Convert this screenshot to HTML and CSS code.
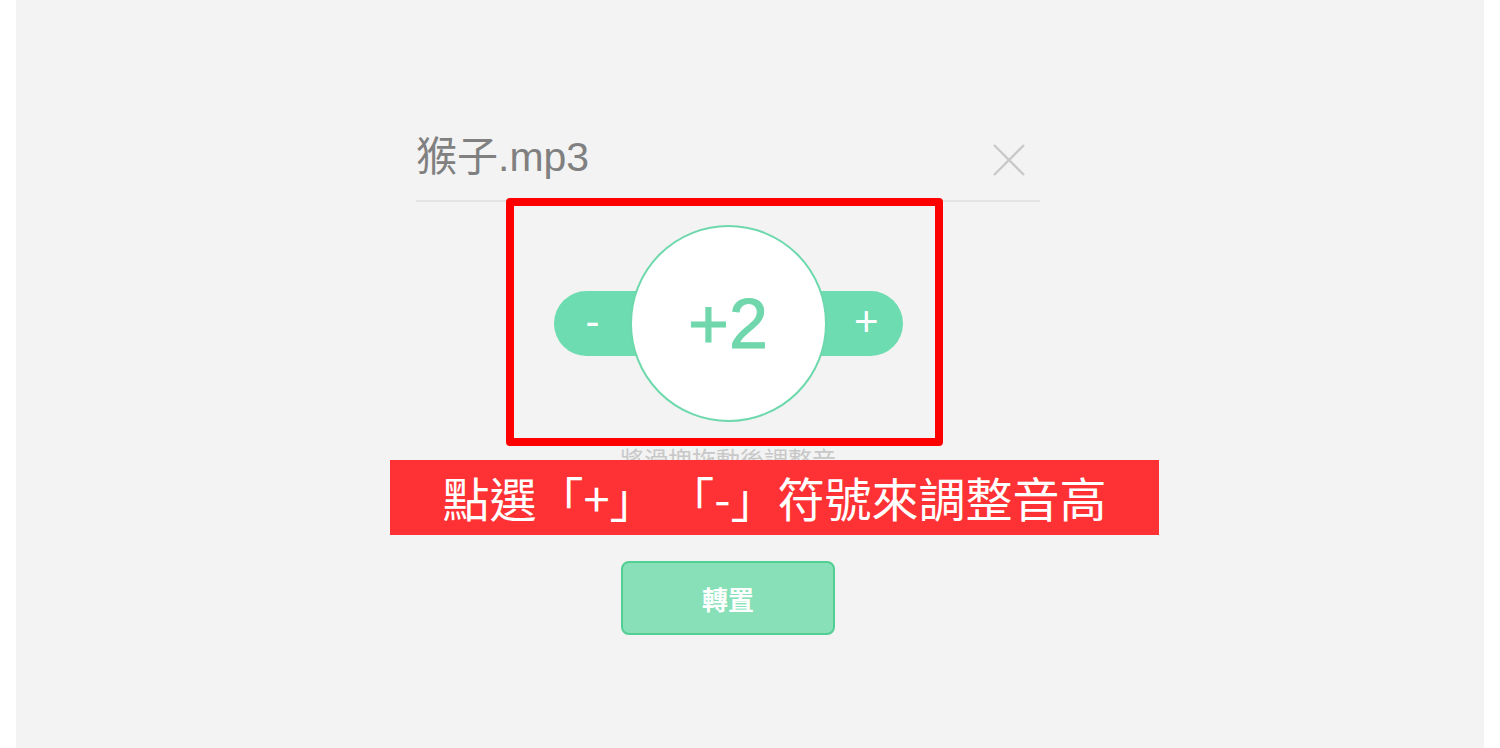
FILE: index.html
```html
<!DOCTYPE html>
<html lang="zh-Hant">
<head>
<meta charset="utf-8">
<title>轉置</title>
<link rel="stylesheet" href="styles.css">
</head>
<body>
<div class="panel">
  <div class="column">
    <div class="file-row">
      <span class="file-name">猴子.mp3</span>
      <svg class="close" width="34" height="34" viewBox="0 0 34 34"><path d="M2 2 L32 32 M32 2 L2 32" stroke="#c9c9c9" stroke-width="2.4" fill="none"/></svg>
    </div>
    <div class="stepper">
      <div class="pill">
        <span class="pill-btn minus">-</span>
        <span class="pill-btn plus">+</span>
      </div>
      <div class="dial">+2</div>
    </div>
    <div class="hint">將滑塊拖動後調整音</div>
    <div class="actions">
      <button class="convert">轉置</button>
    </div>
  </div>
  <div class="frame"></div>
  <div class="banner">點選「+」 「-」符號來調整音高</div>
</div>
</body>
</html>
```
FILE: styles.css
```css
html, body {
  margin: 0;
  padding: 0;
  background: #ffffff;
  font-family: "Liberation Sans", "Noto Sans CJK TC", sans-serif;
}
.panel {
  position: relative;
  margin: 0 16px;
  height: 748px;
  background: #f3f3f3;
  overflow: hidden;
}
.column {
  width: 624px;
  margin-left: 400px;
  padding-top: 120px;
}
.file-row {
  display: flex;
  justify-content: space-between;
  align-items: center;
  height: 80px;
  border-bottom: 2px solid #e3e3e3;
}
.file-name {
  font-size: 41px;
  line-height: 50px;
  color: #808080;
  margin-top: -6px;
}
.close {
  margin-right: 14px;
}
.stepper {
  position: relative;
  width: 349px;
  height: 197px;
  margin: 23px auto 0;
  display: flex;
  align-items: center;
}
.pill {
  width: 100%;
  height: 65px;
  border-radius: 33px;
  background: #6ddcb0;
  display: flex;
  justify-content: space-between;
  align-items: center;
  padding: 0 24px 0 32px;
  box-sizing: border-box;
  color: #ffffff;
  font-size: 42px;
}
.pill-btn {
  line-height: 40px;
  margin-top: -4px;
}
.dial {
  position: absolute;
  left: 76px;
  top: 0;
  width: 193px;
  height: 193px;
  border: 2.5px solid #6ed8ad;
  border-radius: 50%;
  background: #ffffff;
  display: flex;
  align-items: center;
  justify-content: center;
  color: #6fd7ab;
  font-size: 70px;
  -webkit-text-stroke: 1px #6fd7ab;
}
.hint {
  margin-top: 22px;
  text-align: center;
  font-size: 24px;
  line-height: 30px;
  color: #c8c8c8;
  font-family: "Noto Sans CJK TC", sans-serif;
}
.actions {
  display: flex;
  justify-content: center;
  margin-top: 87px;
}
.convert {
  width: 214px;
  height: 74px;
  border: 2px solid #52cf92;
  border-radius: 8px;
  background: #88e0b8;
  color: #ffffff;
  font-family: "Noto Sans CJK TC", sans-serif;
  font-weight: 700;
  font-size: 26px;
  padding: 0;
}
.frame {
  position: absolute;
  left: 490px;
  top: 198px;
  width: 421px;
  height: 232px;
  border: 8px solid #ff0000;
  border-radius: 4px;
}
.banner {
  position: absolute;
  left: 374px;
  top: 460px;
  width: 769px;
  height: 75px;
  background: #fe3234;
  color: #ffffff;
  text-align: center;
  font-family: "Noto Sans CJK TC", sans-serif;
  font-size: 47px;
  line-height: 73px;
  white-space: nowrap;
}
```
